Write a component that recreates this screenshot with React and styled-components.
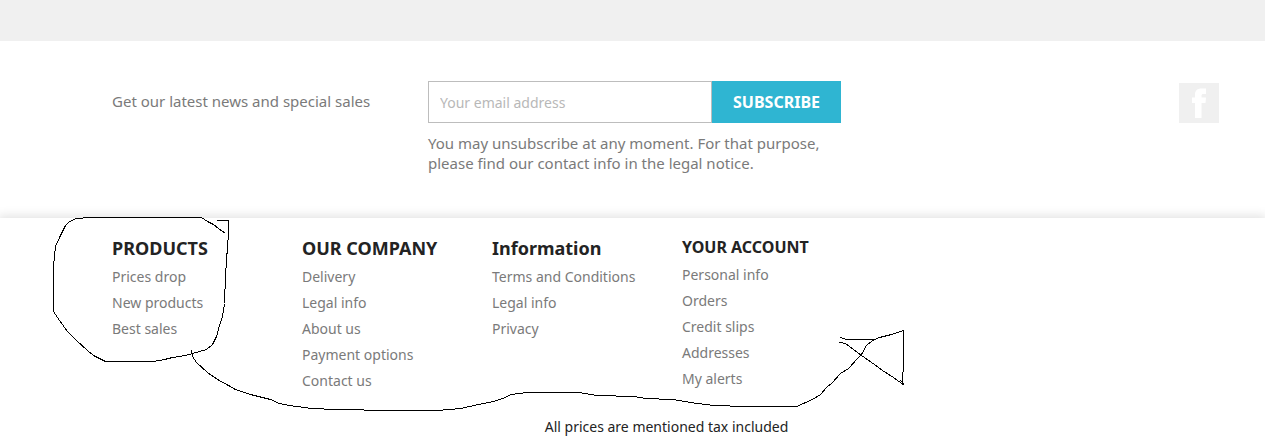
import React from "react";
import styled, { createGlobalStyle } from "styled-components";

const columns = [
	{ title: "PRODUCTS", links: ["Prices drop", "New products", "Best sales"] },
	{
		title: "OUR COMPANY",
		links: ["Delivery", "Legal info", "About us", "Payment options", "Contact us"],
	},
	{ title: "Information", links: ["Terms and Conditions", "Legal info", "Privacy"] },
	{
		title: "YOUR ACCOUNT",
		small: true,
		links: ["Personal info", "Orders", "Credit slips", "Addresses", "My alerts"],
	},
];

function App() {
	return (
		<Page>
			<GlobalStyle />
			<Wrapper />
			<Newsletter>
				<NewsletterForm>
					<NewsletterLabel htmlFor="email">
						Get our latest news and special sales
					</NewsletterLabel>
					<div>
						<InputGroup>
							<EmailInput id="email" type="email" placeholder="Your email address" />
							<SubscribeButton type="button">Subscribe</SubscribeButton>
						</InputGroup>
						<Conditions>
							You may unsubscribe at any moment. For that purpose, please find our
							contact info in the legal notice.
						</Conditions>
					</div>
				</NewsletterForm>
				<SocialLink href="#facebook" aria-label="Facebook">
					<FacebookIcon />
				</SocialLink>
			</Newsletter>
			<Footer>
				<FooterLinks>
					{columns.map(({ title, small, links }) => (
						<section key={title}>
							<ColumnTitle $small={small}>{title}</ColumnTitle>
							<LinkList>
								{links.map((link) => (
									<li key={link}>
										<FooterLink href="#">{link}</FooterLink>
									</li>
								))}
							</LinkList>
						</section>
					))}
				</FooterLinks>
				<TaxNote>All prices are mentioned tax included</TaxNote>
			</Footer>
			<Sketch />
		</Page>
	);
}

function FacebookIcon() {
	return (
		<svg width="40" height="40" viewBox="0 0 40 40" aria-hidden="true">
			<path
				fill="#fff"
				d="M16 35V20H13V14.500H16V11.500C16 7.500 18.500 5.500 22.500 5.500H27V11H24.500C23 11 22.500 11.600 22.500 12.800V14.500H27L26.500 20H22.500V35Z"
			/>
		</svg>
	);
}

// hand drawn arrow from the products block to the free space on the right
function Sketch() {
	return (
		<SketchSvg width="1265" height="436" viewBox="0 0 1265 436" aria-hidden="true">
			<g transform="translate(0.5 0.5)">
				<path d="M225 233L218 228L213 224L207 221L201 217H90L76 218L69 221L65 225L60 235L55 246L54 256L53 265V311L59 320L67 331L76 340L87 350L93 355L105 361H153L164 359L172 357L185 355L192 353L206 349L212 344L216 336L219 325L222 316L224 303L225 275L227 246L228 233V220H216" />
				<path d="M191 350L192 356L196 362L207 372L217 379L228 385L235 389L250 394L270 399L279 403L289 405L311 408L336 409L390 410H437L460 408L478 404L493 401L505 397L510 394L527 392H578L597 395L633 396L645 398L672 399L690 402L713 405L745 406H796L812 399L820 394L826 387L832 382L840 373L848 368L857 358L861 354L866 345L872 340L879 337L891 334L903 330V360L902 384" />
				<path d="M840 337L846 339H873" />
				<path d="M839 342L845 343L861 355L874 364L882 370L893 377L904 385M900 380L904 384" />
			</g>
		</SketchSvg>
	);
}

const GlobalStyle = createGlobalStyle`
	* {
		box-sizing: border-box;
	}
	body {
		margin: 0;
		background: #fff;
		color: #232323;
		font-family: "Noto Sans", sans-serif;
		overflow-x: hidden;
	}
`;

const Page = styled.div`
	position: relative;
	overflow: hidden;
`;

const Wrapper = styled.div`
	height: 41px;
	background: #f0f0f0;
`;

const Newsletter = styled.section`
	display: flex;
	justify-content: space-between;
	align-items: flex-start;
	padding: 40px 46px 45px 112px;
`;

const NewsletterForm = styled.form`
	display: grid;
	grid-template-columns: 286px 1fr;
	column-gap: 30px;
	width: 100%;
	max-width: 729px;
`;

const NewsletterLabel = styled.label`
	padding-top: 10px;
	font-size: 15px;
	line-height: 20px;
	color: #7a7a7a;
`;

const InputGroup = styled.div`
	display: flex;
	height: 42px;
`;

const EmailInput = styled.input`
	flex: 1;
	min-width: 0;
	padding: 0 11px;
	border: 1px solid #bdbdbd;
	border-radius: 0;
	font-family: inherit;
	font-size: 14px;
	color: #7a7a7a;
	outline: none;

	&::placeholder {
		color: #b8b8b8;
	}
`;

const SubscribeButton = styled.button`
	width: 129px;
	padding: 0;
	border: none;
	background: #2fb5d2;
	color: #fff;
	font-family: inherit;
	font-size: 16px;
	font-weight: 700;
	text-transform: uppercase;
	cursor: pointer;
`;

const Conditions = styled.p`
	margin: 10px 0 0;
	font-size: 15px;
	line-height: 20px;
	color: #7a7a7a;
`;

const SocialLink = styled.a`
	display: block;
	width: 40px;
	height: 40px;
	margin-top: 2px;
	background: #f0f0f0;
`;

const Footer = styled.footer`
	padding-top: 20px;
	box-shadow: 0 0 10px 2px rgba(0, 0, 0, 0.12);
`;

const FooterLinks = styled.div`
	display: grid;
	grid-template-columns: repeat(4, 190px);
	padding-left: 112px;
`;

const ColumnTitle = styled.h3`
	margin: 0 0 6px;
	font-size: ${({ $small }) => ($small ? "16px" : "18px")};
	line-height: ${({ $small }) => ($small ? "18px" : "20px")};
	font-weight: 700;
	white-space: nowrap;
`;

const LinkList = styled.ul`
	margin: 0;
	padding: 0;
	list-style: none;
	line-height: 26px;
`;

const FooterLink = styled.a`
	display: block;
	font-size: 14px;
	color: #7a7a7a;
	text-decoration: none;
	white-space: nowrap;
`;

const TaxNote = styled.p`
	margin: 23px 0 0;
	padding-left: 68px;
	font-size: 14px;
	line-height: 20px;
	text-align: center;
`;

const SketchSvg = styled.svg`
	position: absolute;
	top: 0;
	left: 0;
	fill: none;
	stroke: #000;
	stroke-width: 1;
	shape-rendering: crispEdges;
	pointer-events: none;
`;

export default App;
